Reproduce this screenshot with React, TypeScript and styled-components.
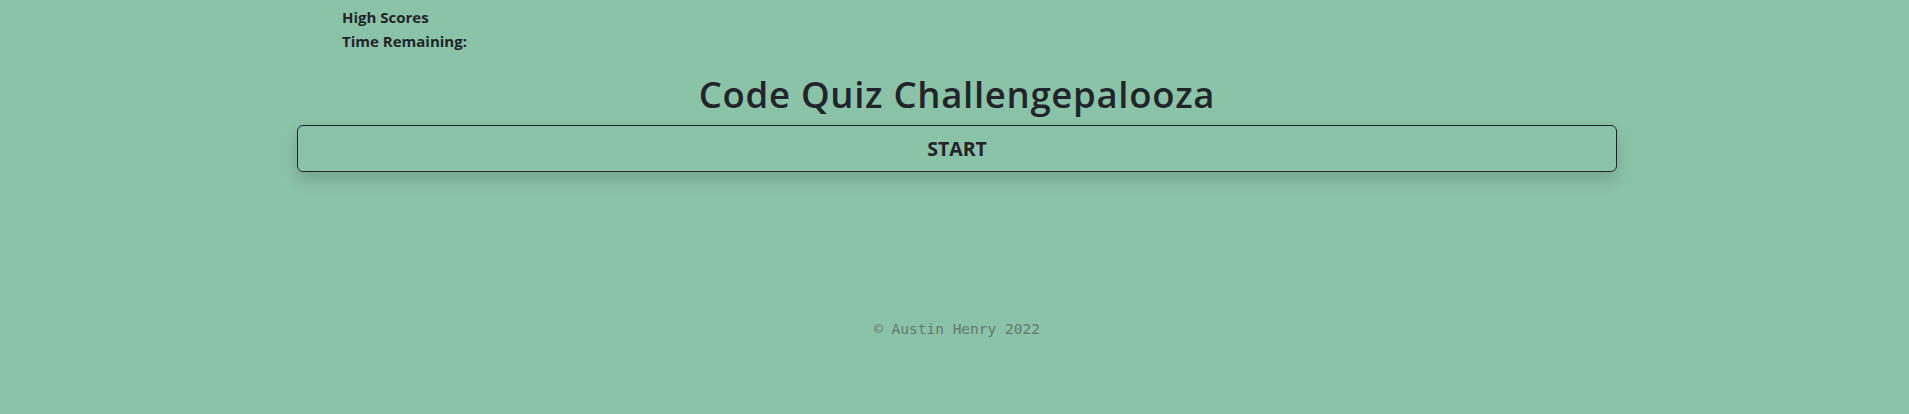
import styled, { createGlobalStyle } from 'styled-components';

const GlobalStyle = createGlobalStyle`
  html, body {
    margin: 0;
    padding: 0;
    background: #8bc3a9;
  }
  body {
    font-family: 'Open Sans', 'Noto Sans', sans-serif;
    color: #212529;
  }
`;

const Page = styled.div`
  min-height: 414px;
  padding-left: 5px;
  box-sizing: border-box;
`;

const Container = styled.div`
  width: 1320px;
  margin: 0 auto;
`;

const Nav = styled.nav`
  display: flex;
  flex-direction: column;
  padding: 5px 0 0 45px;
  font-size: 15px;
  font-weight: 700;
  line-height: 24px;

  a {
    color: inherit;
    text-decoration: none;
  }
`;

const Title = styled.h1`
  margin: 20px 0 0;
  text-align: center;
  font-size: 36.5px;
  font-weight: 600;
  letter-spacing: 0.7px;
  line-height: 1.2;
`;

const StartButton = styled.button`
  display: block;
  width: 100%;
  height: 47px;
  margin-top: 8px;
  padding: 0;
  background: transparent;
  border: 1px solid #212529;
  border-radius: 6px;
  box-shadow: 0 8px 16px rgba(0, 0, 0, 0.15);
  font-family: inherit;
  font-size: 19.5px;
  font-weight: 700;
  color: #212529;
  cursor: pointer;
`;

const Footer = styled.footer`
  margin-top: 147px;
  text-align: center;
  font-family: 'DejaVu Sans Mono', 'Liberation Mono', monospace;
  font-size: 14.5px;
  line-height: 20px;
  color: #66776f;
`;

export default function App() {
  return (
    <Page>
      <GlobalStyle />
      <Container>
        <Nav>
          <a href="#">High Scores</a>
          <span>Time Remaining:</span>
        </Nav>
        <Title>Code Quiz Challengepalooza</Title>
        <StartButton>START</StartButton>
        <Footer>© Austin Henry 2022</Footer>
      </Container>
    </Page>
  );
}
